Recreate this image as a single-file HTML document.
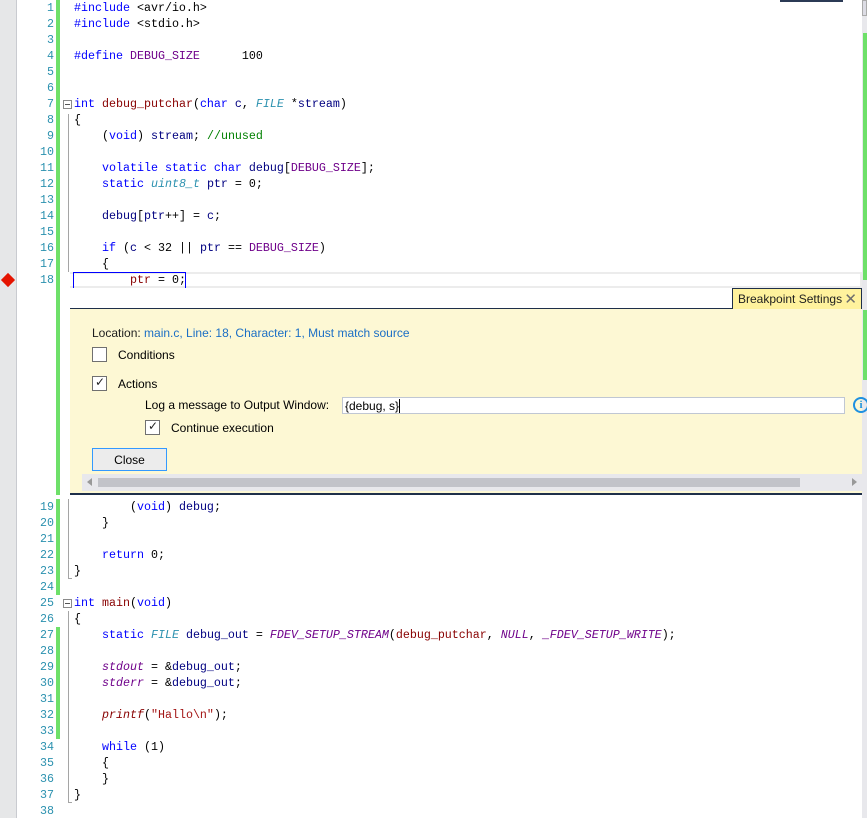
<!DOCTYPE html>
<html><head><meta charset="utf-8"><style>
*{margin:0;padding:0;box-sizing:border-box}
body{width:867px;height:818px;background:#fff;position:relative;overflow:hidden;font-family:"Liberation Mono",monospace;font-size:11.67px}
.gm{position:absolute;left:0;top:0;width:17px;height:818px;background:#e6e7e8;border-right:1px solid #c9cbd0}
.ln{position:absolute;left:20px;width:34px;text-align:right;color:#2b91af;height:16px;line-height:17px}
.cl{position:absolute;left:74px;height:16px;line-height:17px;white-space:pre;color:#000}
.gb{position:absolute;left:56px;width:4px;background:#6ee069}
.ol{position:absolute;left:68px;width:1px;background:#a5a5a5}
.k{color:#0000ff}.f{color:#880000}.m{color:#6f008a}.t{color:#2b91af;font-style:italic}.c{color:#008000}.v{color:#000080}.mi{color:#6f008a;font-style:italic}.fi{color:#880000;font-style:italic}
.box{position:absolute;left:63px;width:9px;height:9px;border:1px solid #8a8a8a;background:#fff}
.box:after{content:"";position:absolute;left:1px;top:3px;width:5px;height:1px;background:#555}
.ui{font-family:"Liberation Sans",sans-serif;font-size:12px;position:absolute;white-space:nowrap}
.cb{position:absolute;width:15px;height:15px;border:1px solid #707070;background:#fff}
</style></head><body>
<div class="gm"></div>
<div style="position:absolute;left:3px;top:275px;width:10px;height:10px;background:#e51400;transform:rotate(45deg)"></div>
<div class="gb" style="top:0;height:495px"></div>
<div class="gb" style="top:499px;height:96px"></div>
<div class="gb" style="top:627px;height:112px"></div>
<div class="ol" style="top:114px;height:158px"></div>
<div class="ol" style="top:499px;height:80px"></div>
<div class="ol" style="top:611px;height:192px"></div>
<div style="position:absolute;left:68px;top:578px;width:4px;height:1px;background:#a5a5a5"></div>
<div style="position:absolute;left:68px;top:802px;width:4px;height:1px;background:#a5a5a5"></div>
<div class="box" style="top:100px"></div>
<div class="box" style="top:599px"></div>
<!-- right strip -->
<div style="position:absolute;left:862px;top:0;width:5px;height:818px;background:#e8e8ec"></div>
<div style="position:absolute;left:863px;top:33px;width:4px;height:247px;background:#6ee069"></div>
<div style="position:absolute;left:863px;top:310px;width:4px;height:70px;background:#6ee069"></div>
<div style="position:absolute;left:780px;top:0;width:63px;height:2px;background:#2b3a55"></div>
<div style="position:absolute;left:862px;top:0;width:5px;height:16px;background:#dcdce4;border:1px solid #aaa"></div>

<!-- line 18 highlight -->
<div style="position:absolute;left:70px;top:272px;width:792px;height:16px;border:2px solid #ececec;border-left:none"></div>
<div style="position:absolute;left:73px;top:272px;width:113px;height:16px;border:1px solid #0000ff;border-bottom:none"></div>

<div id="code"></div>
<script>
var L={
1:'<span class="k">#include</span> &lt;avr/io.h&gt;',
2:'<span class="k">#include</span> &lt;stdio.h&gt;',
4:'<span class="k">#define</span> <span class="m">DEBUG_SIZE</span>      100',
7:'<span class="k">int</span> <span class="f">debug_putchar</span>(<span class="k">char</span> <span class="v">c</span>, <span class="t">FILE</span> *<span class="v">stream</span>)',
8:'{',
9:'    (<span class="k">void</span>) <span class="v">stream</span>; <span class="c">//unused</span>',
11:'    <span class="k">volatile static char</span> <span class="v">debug</span>[<span class="m">DEBUG_SIZE</span>];',
12:'    <span class="k">static</span> <span class="t">uint8_t</span> <span class="v">ptr</span> = 0;',
14:'    <span class="v">debug</span>[<span class="v">ptr</span>++] = <span class="v">c</span>;',
16:'    <span class="k">if</span> (<span class="v">c</span> &lt; 32 || <span class="v">ptr</span> == <span class="m">DEBUG_SIZE</span>)',
17:'    {',
18:'        <span class="f">ptr</span> = 0;',
19:'        (<span class="k">void</span>) <span class="v">debug</span>;',
20:'    }',
22:'    <span class="k">return</span> 0;',
23:'}',
25:'<span class="k">int</span> <span class="f">main</span>(<span class="k">void</span>)',
26:'{',
27:'    <span class="k">static</span> <span class="t">FILE</span> <span class="v">debug_out</span> = <span class="mi">FDEV_SETUP_STREAM</span>(<span class="f">debug_putchar</span>, <span class="mi">NULL</span>, <span class="mi">_FDEV_SETUP_WRITE</span>);',
29:'    <span class="mi">stdout</span> = &amp;<span class="v">debug_out</span>;',
30:'    <span class="mi">stderr</span> = &amp;<span class="v">debug_out</span>;',
32:'    <span class="fi">printf</span>(<span style="color:#a31515">"Hallo\\n"</span>);',
34:'    <span class="k">while</span> (1)',
35:'    {',
36:'    }',
37:'}'};
var h='';
for(var n=1;n<=38;n++){var t=n<=18?(n-1)*16:499+(n-19)*16;
h+='<div class="ln" style="top:'+t+'px">'+n+'</div>';
if(L[n])h+='<div class="cl" style="top:'+t+'px">'+L[n]+'</div>';}
document.getElementById('code').innerHTML=h;
</script>

<!-- peek -->
<div style="position:absolute;left:70px;top:308px;width:792px;height:1px;background:#1e2f4a"></div>
<div style="position:absolute;left:70px;top:309px;width:792px;height:184px;background:#fdf8d4"></div>
<div style="position:absolute;left:70px;top:493px;width:792px;height:2px;background:#1e2f4a"></div>
<div class="ui" style="left:732px;top:288px;width:130px;height:21px;background:#fff29d;border:1px solid #1e2f4a;border-bottom:none;padding:3px 0 0 5px;color:#1e1e1e">Breakpoint Settings <span style="position:absolute;right:4px;top:1px;font-size:15px;color:#6d6d6d">✕</span></div>
<div class="ui" style="left:92px;top:326px;color:#1e1e1e">Location: <span style="color:#1c6fc5">main.c, Line: 18, Character: 1, Must match source</span></div>
<div class="cb" style="left:92px;top:347px"></div>
<div class="ui" style="left:118px;top:348px">Conditions</div>
<div class="cb" style="left:92px;top:376px"></div>
<div class="ui" style="left:95px;top:375px;font-size:12px;color:#222">✓</div>
<div class="ui" style="left:118px;top:377px">Actions</div>
<div class="ui" style="left:145px;top:398px">Log a message to Output Window:</div>
<div class="ui" style="left:342px;top:397px;width:503px;height:17px;background:#fff;border:1px solid #c0c7d3;padding:1px 0 0 2px">{debug, s}<span style="display:inline-block;width:1px;height:14px;background:#000;vertical-align:-3px"></span></div>
<div style="position:absolute;left:853px;top:397px;width:16px;height:16px;border:2px solid #1e90e0;border-radius:50%;color:#1e90e0;font:bold 11px 'Liberation Serif',serif;text-align:center;line-height:12px">i</div>
<div class="cb" style="left:145px;top:420px"></div>
<div class="ui" style="left:148px;top:419px;font-size:12px;color:#222">✓</div>
<div class="ui" style="left:171px;top:421px">Continue execution</div>
<div class="ui" style="left:92px;top:448px;width:75px;height:23px;background:#ececec;border:1px solid #3399ff;text-align:center;line-height:22px">Close</div>
<div style="position:absolute;left:82px;top:474px;width:780px;height:17px;background:#e8e8ec"></div>
<div style="position:absolute;left:98px;top:478px;width:702px;height:9px;background:#c2c3c9"></div>
<div style="position:absolute;left:87px;top:478px;border:4px solid transparent;border-right:5px solid #999;border-left:none"></div>
<div style="position:absolute;left:852px;top:478px;border:4px solid transparent;border-left:5px solid #999;border-right:none"></div>
</body></html>
